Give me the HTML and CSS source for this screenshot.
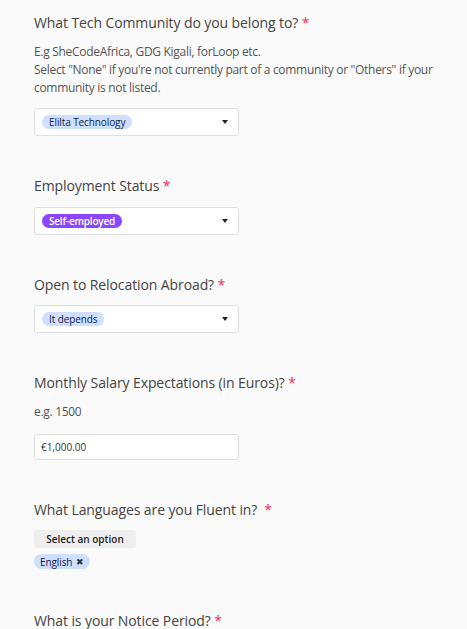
FILE: index.html
```html
<!DOCTYPE html>
<html>
<head>
<meta charset="utf-8">
<link rel="stylesheet" href="styles.css">
</head>
<body>
<form class="form">
  <div class="field">
    <div class="label">What Tech Community do you belong to? <span class="req">*</span></div>
    <div class="desc">E.g SheCodeAfrica, GDG Kigali, forLoop etc.<br>Select "None" if you're not currently part of a community or "Others" if your community is not listed.</div>
    <div class="select select-first"><span class="pill pill-blue">Elilta Technology</span><span class="caret"></span></div>
  </div>
  <div class="field">
    <div class="label">Employment Status <span class="req">*</span></div>
    <div class="select"><span class="pill pill-purple">Self-employed</span><span class="caret"></span></div>
  </div>
  <div class="field">
    <div class="label">Open to Relocation Abroad? <span class="req">*</span></div>
    <div class="select select-tight"><span class="pill pill-blue">It depends</span><span class="caret"></span></div>
  </div>
  <div class="field">
    <div class="label">Monthly Salary Expectations (in Euros)? <span class="req">*</span></div>
    <div class="desc">e.g. 1500</div>
    <div class="input">€1,000.00</div>
  </div>
  <div class="field field-langs">
    <div class="label">What Languages are you Fluent in? &nbsp;<span class="req">*</span></div>
    <div class="btn">Select an option</div>
    <div class="chips"><span class="pill pill-blue chip">English <span class="x">✖</span></span></div>
  </div>
  <div class="field">
    <div class="label">What is your Notice Period? <span class="req">*</span></div>
  </div>
</form>
</body>
</html>
```
FILE: styles.css
```css
html, body {
  margin: 0;
  padding: 0;
  background: #fafafa;
}
body {
  font-family: "Open Sans", "Noto Sans", sans-serif;
  color: #444;
}
.form {
  padding: 13px 30px 0 34px;
  width: 405px;
}
.field {
  margin-bottom: 40px;
}
.field-langs { margin-bottom: 42px; }
.label {
  font-size: 14px;
  line-height: 20px;
  color: #444;
  letter-spacing: -0.1px;
}
.req {
  color: #f22e5a;
}
.desc {
  margin-top: 10px;
  font-size: 12px;
  line-height: 18px;
  color: #555;
  letter-spacing: -0.3px;
}
.select {
  margin-top: 11px;
  box-sizing: border-box;
  width: 205px;
  height: 28px;
  background: #fff;
  border: 1px solid #e0e0e0;
  border-radius: 3px;
  display: flex;
  align-items: center;
  justify-content: space-between;
  padding: 0 8px 0 7px;
}
.select-first { margin-top: 11px; }
.select-tight { margin-top: 10px; }
.caret {
  width: 0;
  height: 0;
  border-left: 3px solid transparent;
  border-right: 3px solid transparent;
  border-top: 4px solid #222;
  margin-right: 2px;
}
.pill {
  display: inline-flex;
  align-items: center;
  height: 14px;
  padding: 0 7px;
  border-radius: 8px;
  font-size: 10px;
  line-height: 14px;
  letter-spacing: -0.1px;
  color: #222;
}
.pill-blue { background: #cfdfff; color: #102046; }
.pill-purple { background: #8b46ff; color: #fff; font-weight: 600; letter-spacing: -0.2px; padding: 0 7px; }
.input {
  margin-top: 13px;
  box-sizing: border-box;
  width: 205px;
  height: 26px;
  background: #fff;
  border: 1px solid #e0e0e0;
  border-radius: 3px;
  display: flex;
  align-items: center;
  padding: 0 6px;
  font-size: 10px;
  color: #333;
}
.btn {
  margin-top: 10px;
  box-sizing: border-box;
  width: 102px;
  height: 18px;
  background: #eee;
  border-radius: 3px;
  font-size: 10px;
  font-weight: 600;
  line-height: 18px;
  text-align: center;
  color: #222;
}
.chips { margin-top: 6px; display: flex; }
.chip { height: 15px; padding: 0 6px; }
.x { font-size: 9px; margin-left: 4px; color: #333; }
```
